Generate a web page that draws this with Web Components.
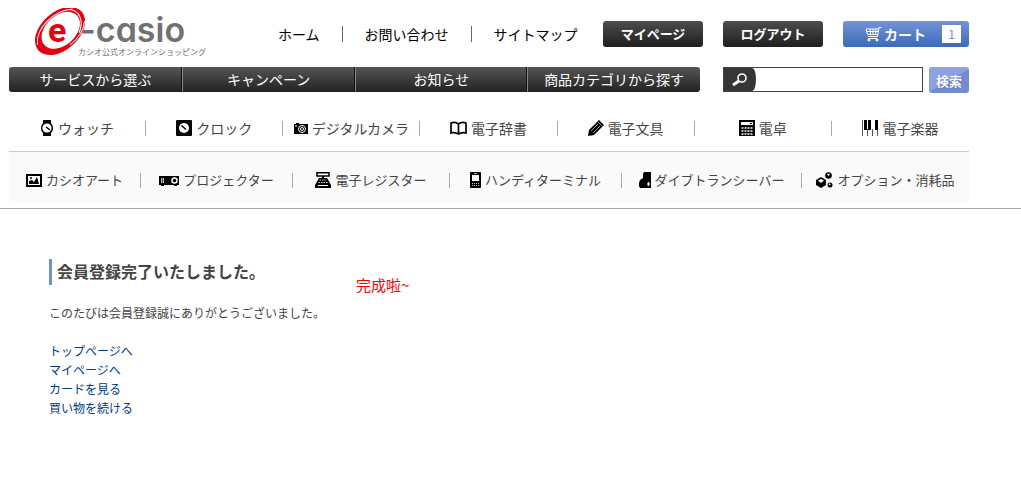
<!DOCTYPE html>
<html lang="ja">
<head>
<meta charset="utf-8">
<title>e-casio 会員登録完了</title>
<style>
    body {
        margin: 0;
        background: #fff;
        color: #333;
        font-family: "Noto Sans CJK JP", "Liberation Sans", sans-serif;
    }
</style>
</head>
<body>
<site-header></site-header>
<register-complete>
    <span slot="title">会員登録完了いたしました。</span>
    <span slot="message">このたびは会員登録誠にありがとうございました。</span>
    <span slot="note" lang="zh">完成啦~</span>
</register-complete>

<script>
class CasioLogo extends HTMLElement {
    constructor() {
        super();
        this.attachShadow({mode: "open"}).innerHTML = `
        <style>
        :host {
            display: block;
        }
        a, svg {
            display: block;
        }
        .mark {
            font: bold 34px Roboto, sans-serif;
            fill: #e60012;
        }
        .name {
            font: 600 34px Inter, sans-serif;
            font-feature-settings: "cv11";
            fill: #727171;
        }
        .tagline {
            font: 8px "Noto Sans CJK JP", sans-serif;
            fill: #727171;
        }
        </style>
        <a href="#">
            <svg width="174" height="52" viewBox="34 8 174 52">
                <g transform="translate(60 31) rotate(-42)">
                    <ellipse rx="29" ry="19" fill="#e60012"/>
                    <ellipse cx="1" cy="0" rx="22" ry="15" fill="#fff"/>
                    <path d="M-26 -5C-16 -18 8 -20 24 -8" fill="none" stroke="#fff" stroke-width="1"/>
                    <path d="M21 -10C29 -2 24 9 13 14" fill="none" stroke="#fff" stroke-width="1"/>
                    <path d="M25 9C17 16 8 18 -2 17" fill="none" stroke="#fff" stroke-width="1"/>
                </g>
                <text class="mark" x="48" y="42">e</text>
                <text class="name" x="80" y="42">-casio</text>
                <text class="tagline" x="78" y="55">カシオ公式オンラインショッピング</text>
            </svg>
        </a>
        `;
    }
}
customElements.define("casio-logo", CasioLogo);

class TopLinks extends HTMLElement {
    constructor() {
        super();
        this.attachShadow({mode: "open"}).innerHTML = `
        <style>
        :host {
            display: block;
        }
        nav {
            display: flex;
            align-items: center;
        }
        a {
            padding: 0 22px;
            font-size: 14px;
            line-height: 16px;
            color: #000;
            text-decoration: none;
            white-space: nowrap;
        }
        a + a {
            border-left: 1px solid #666;
        }
        </style>
        <nav>
            <a href="#">ホーム</a>
            <a href="#">お問い合わせ</a>
            <a href="#">サイトマップ</a>
        </nav>
        `;
    }
}
customElements.define("top-links", TopLinks);

class HeaderButton extends HTMLElement {
    constructor() {
        super();
        this.attachShadow({mode: "open"}).innerHTML = `
        <style>
        :host {
            display: block;
        }
        button {
            display: flex;
            align-items: center;
            justify-content: center;
            width: 100px;
            height: 26px;
            padding: 0 0 2px;
            border: 0;
            border-radius: 3px;
            background: linear-gradient(#4d4d4d, #1f1f1f);
            color: #fff;
            font: bold 13px "Noto Sans CJK JP", sans-serif;
            cursor: pointer;
        }
        </style>
        <button type="button"><slot></slot></button>
        `;
    }
}
customElements.define("header-button", HeaderButton);

class CartButton extends HTMLElement {
    constructor() {
        super();
        this.attachShadow({mode: "open"}).innerHTML = `
        <style>
        :host {
            display: block;
        }
        button {
            display: flex;
            align-items: center;
            width: 126px;
            height: 26px;
            padding: 0 8px 0 22px;
            border: 0;
            border-radius: 3px;
            background: linear-gradient(#7593d8, #3a6bb8);
            color: #fff;
            font: bold 14px "Noto Sans CJK JP", sans-serif;
            cursor: pointer;
        }
        svg {
            margin-right: 2px;
        }
        .count {
            width: 19px;
            margin-left: auto;
            background: #fff;
            color: #7490d4;
            font-size: 12px;
            font-weight: normal;
            line-height: 18px;
            text-align: center;
        }
        </style>
        <button type="button">
            <svg width="17" height="16" viewBox="0 0 17 16" fill="none" stroke="#fff" stroke-width="1">
                <path d="M16.500 1.500H14L12.500 10.500H3M1 3H13.500M1 3L2.500 8.500H12.500M1.500 5.500H13M5 3L5.500 8.500M8 3V8.500M11 3L10.500 8.500M3 12.500H12"/>
                <circle cx="4" cy="14" r="1" fill="#fff"/>
                <circle cx="12" cy="14" r="1" fill="#fff"/>
            </svg>
            <slot></slot>
            <span class="count">${this.getAttribute("count") || 0}</span>
        </button>
        `;
    }
}
customElements.define("cart-button", CartButton);

class MainNav extends HTMLElement {
    constructor() {
        super();
        this.attachShadow({mode: "open"}).innerHTML = `
        <style>
        :host {
            display: block;
        }
        nav {
            display: grid;
            grid-template-columns: repeat(4, 1fr);
            border-radius: 3px;
            overflow: hidden;
            background: linear-gradient(#555, #222);
        }
        a {
            color: #fff;
            font-size: 14px;
            line-height: 25px;
            text-align: center;
            text-decoration: none;
            white-space: nowrap;
        }
        a + a {
            border-left: 1px solid #888;
            box-shadow: -1px 0 #111;
        }
        </style>
        <nav>
            <a href="#">サービスから選ぶ</a>
            <a href="#">キャンペーン</a>
            <a href="#">お知らせ</a>
            <a href="#">商品カテゴリから探す</a>
        </nav>
        `;
    }
}
customElements.define("main-nav", MainNav);

class SearchBox extends HTMLElement {
    constructor() {
        super();
        this.attachShadow({mode: "open"}).innerHTML = `
        <style>
        :host {
            display: block;
        }
        form {
            display: flex;
            gap: 6px;
        }
        .field {
            display: flex;
            flex: 1;
            box-sizing: border-box;
            height: 25px;
            border: 1px solid #444;
        }
        label {
            display: flex;
            align-items: center;
            justify-content: center;
            width: 32px;
            border-radius: 0 4px 4px 0 / 0 12px 12px 0;
            background: #363636;
        }
        input {
            flex: 1;
            min-width: 0;
            padding: 0 4px;
            border: 0;
            outline: 0;
            background: #fff;
            font: 13px "Noto Sans CJK JP", sans-serif;
        }
        button {
            width: 40px;
            height: 26px;
            padding: 0;
            border: 0;
            border-radius: 3px;
            background: linear-gradient(150deg, #8ea2e2 50%, #748bd3 52%);
            color: #fff;
            font: bold 13px "Noto Sans CJK JP", sans-serif;
            text-shadow: 0 1px 2px #5f72b8;
            cursor: pointer;
        }
        </style>
        <form>
            <div class="field">
                <label for="keyword">
                    <svg width="18" height="14" viewBox="0 0 18 14" fill="none" stroke="#fff" role="img" aria-label="キーワード">
                        <circle cx="11" cy="5" r="4" stroke-width="1.600"/>
                        <path d="M8 8L2 12" stroke-width="3"/>
                    </svg>
                </label>
                <input type="text" id="keyword">
            </div>
            <button type="button">検索</button>
        </form>
        `;
    }
}
customElements.define("search-box", SearchBox);

// 16x16, black shapes with white details
const icons = {
    watch: `<path d="M3 0H11V3A7 7 0 0 1 11 13V16H3V13A7 7 0 0 1 3 3Z"/><circle cx="7" cy="8" r="4.600" fill="#fff"/><path d="M6 7L10 10" stroke="#000" stroke-width="1.500"/>`,
    clock: `<rect width="16" height="16" rx="1"/><circle cx="8" cy="8" r="5" fill="#fff"/><path d="M5.500 5.500L10 9.500" stroke="#000" stroke-width="1.500"/>`,
    camera: `<path d="M0 4H2V3H5V4H14V14H0Z"/><circle cx="8" cy="9" r="3.500" fill="none" stroke="#fff"/><circle cx="8" cy="9" r="1.500" fill="none" stroke="#fff"/><path d="M1 6H3" stroke="#fff"/>`,
    book: `<path d="M1 3C4 2 6 2 8.500 4C11 2 13 2 16 3V13C13 12 11 13 8.500 14C6 13 4 12 1 13ZM8.500 4V14" fill="#fff" stroke="#000" stroke-width="1.700"/>`,
    pencil: `<path d="M0 16L1 10L11 0L16 5L6 15Z"/><path d="M3 11L10 4M5 13L12 6M10 2L14 6" stroke="#fff" stroke-width=".6"/>`,
    calc: `<rect width="16" height="16"/><path d="M2 2H14V5H2Z" fill="#fff"/><path d="M11 3.500H13" stroke="#000"/><path d="M2.500 8H14M2.500 11H14M2.500 14H14" stroke="#fff" stroke-width="1.700" stroke-dasharray="2 1"/>`,
    piano: `<path d="M.5 0V16M5.500 9V16M10.500 9V16M15.500 9V16" stroke="#555"/><path d="M2 0H5V10H2ZM6 0H9V10H6ZM13 0H16V10H13Z"/>`,
    art: `<path d="M0 2H16V15H0Z"/><path d="M2 4H14V13H2Z" fill="#fff"/><path d="M3 12V9L6 8L8 10L11 5L13 12Z"/><circle cx="5" cy="6" r="1"/>`,
    projector: `<path d="M0 4H20V13H18V14H15V13H5V14H2V13H0Z"/><path d="M2 6H5V11H2Z" fill="#bbb"/><path d="M3.500 6V11" stroke="#000" stroke-width=".6"/><circle cx="15.500" cy="8.500" r="2.500" fill="none" stroke="#fff" stroke-width="1.500"/>`,
    register: `<path d="M2 .8H14V4H2Z" fill="#fff" stroke="#000" stroke-width="1.500"/><path d="M7 4H9V6H12L16 13V16H0V13L4 6H7Z"/><path d="M4.500 8H12M3.500 10.500H13" stroke="#fff" stroke-width=".8" stroke-dasharray="1.500 1"/><path d="M3 13.500H13" stroke="#fff"/>`,
    terminal: `<rect width="11" height="16" rx="1"/><path d="M2 3H9V9H2Z" fill="#fff"/><path d="M2 11.500H9M2 13.500H9" stroke="#fff" stroke-width=".8" stroke-dasharray="1 1"/><path d="M4 1.500H7" stroke="#fff" stroke-width=".7"/>`,
    transceiver: `<path d="M4 2Q4 0 6 0H12V16H1L0 14V11L1 8L4 6Z"/><ellipse cx="9.500" cy="12" rx="1.200" ry="2" fill="#fff"/>`,
    option: `<path d="M5 5L10 8V13L5 16L0 13V8Z"/><path d="M2 8.500L5 7L8 8.500L5 11Z" fill="#fff"/><circle cx="12.500" cy="3.500" r="3.300"/><path d="M11 2.500L12.500 1.500L14 2.500L12.500 4Z" fill="#fff"/><circle cx="14" cy="13" r="2.500"/><circle cx="13.700" cy="12.300" r=".9" fill="#fff"/>`
};
// icons that are not 16 wide
const iconWidths = {watch: 14, camera: 14, book: 17, projector: 20, terminal: 11, transceiver: 12, option: 17};

class CategoryItem extends HTMLElement {
    connectedCallback() {
        if (this.shadowRoot) return;
        const name = this.getAttribute("icon");
        const width = iconWidths[name] || 16;
        this.attachShadow({mode: "open"}).innerHTML = `
        <style>
        :host {
            display: flex;
            align-items: center;
        }
        a {
            display: flex;
            flex: 1;
            align-items: center;
            justify-content: center;
            gap: 4px;
            padding-bottom: 1px;
            color: #444;
            line-height: 20px;
            text-decoration: none;
            white-space: nowrap;
        }
        :host(:not(:last-child))::after {
            content: "";
            height: 15px;
            border-right: 1px solid #aaa;
        }
        </style>
        <a href="#">
            <svg width="${width}" height="16" viewBox="0 0 ${width} 16">${icons[name]}</svg>
            <slot></slot>
        </a>
        `;
    }
}
customElements.define("category-item", CategoryItem);

class CategoryMenu extends HTMLElement {
    constructor() {
        super();
        this.attachShadow({mode: "open"}).innerHTML = `
        <style>
        :host {
            display: block;
        }
        .row {
            display: grid;
            height: 45px;
        }
        .products {
            grid-template-columns: repeat(7, 1fr);
            font-size: 14px;
        }
        .others {
            grid-template-columns: 132fr 152fr 157fr 172fr 180fr 167fr;
            padding-top: 6px;
            border-top: 1px solid #ccc;
            background: #fafafa;
            font-size: 13px;
        }
        </style>
        <div class="row products">
            <category-item icon="watch">ウォッチ</category-item>
            <category-item icon="clock">クロック</category-item>
            <category-item icon="camera">デジタルカメラ</category-item>
            <category-item icon="book">電子辞書</category-item>
            <category-item icon="pencil">電子文具</category-item>
            <category-item icon="calc">電卓</category-item>
            <category-item icon="piano">電子楽器</category-item>
        </div>
        <div class="row others">
            <category-item icon="art">カシオアート</category-item>
            <category-item icon="projector">プロジェクター</category-item>
            <category-item icon="register">電子レジスター</category-item>
            <category-item icon="terminal">ハンディターミナル</category-item>
            <category-item icon="transceiver">ダイブトランシーバー</category-item>
            <category-item icon="option">オプション・消耗品</category-item>
        </div>
        `;
    }
}
customElements.define("category-menu", CategoryMenu);

class SiteHeader extends HTMLElement {
    constructor() {
        super();
        this.attachShadow({mode: "open"}).innerHTML = `
        <style>
        :host {
            display: block;
            padding: 8px 9px 5px;
            border-bottom: 1px solid #aaa;
        }
        .inner {
            max-width: 960px;
        }
        .top {
            display: flex;
            align-items: center;
            padding-left: 25px;
        }
        top-links {
            margin-left: 48px;
        }
        .buttons {
            display: flex;
            gap: 20px;
            margin-left: auto;
        }
        .bar {
            display: grid;
            grid-template-columns: minmax(0, 1fr) 246px;
            gap: 23px;
            margin: 7px 0 13px;
        }
        </style>
        <header class="inner">
            <div class="top">
                <casio-logo></casio-logo>
                <top-links></top-links>
                <div class="buttons">
                    <header-button>マイページ</header-button>
                    <header-button>ログアウト</header-button>
                    <cart-button count="1">カート</cart-button>
                </div>
            </div>
            <div class="bar">
                <main-nav></main-nav>
                <search-box></search-box>
            </div>
            <category-menu></category-menu>
        </header>
        `;
    }
}
customElements.define("site-header", SiteHeader);

class RegisterComplete extends HTMLElement {
    constructor() {
        super();
        this.attachShadow({mode: "open"}).innerHTML = `
        <style>
        :host {
            display: flex;
            gap: 31px;
            padding: 50px 49px;
        }
        h1 {
            margin: 0 0 18px;
            padding: 0 0 2px 5px;
            border-left: 3px solid #7590d0;
            color: #444;
            font-size: 16px;
            line-height: 24px;
        }
        p {
            margin: 0 0 19px;
            color: #444;
            font-size: 12px;
            line-height: 19px;
        }
        ul {
            margin: 0;
            padding: 0;
            list-style: none;
            font-size: 12px;
            line-height: 19px;
        }
        a {
            color: #003a80;
            text-decoration: none;
        }
        .note {
            padding-top: 16px;
            color: #f00;
            font-family: "Noto Sans CJK SC", sans-serif;
            font-size: 15px;
            line-height: 20px;
        }
        </style>
        <main>
            <h1><slot name="title"></slot></h1>
            <p><slot name="message"></slot></p>
            <ul>
                <li><a href="#">トップページへ</a></li>
                <li><a href="#">マイページへ</a></li>
                <li><a href="#">カードを見る</a></li>
                <li><a href="#">買い物を続ける</a></li>
            </ul>
        </main>
        <div class="note"><slot name="note"></slot></div>
        `;
    }
}
customElements.define("register-complete", RegisterComplete);
</script>
</body>
</html>
